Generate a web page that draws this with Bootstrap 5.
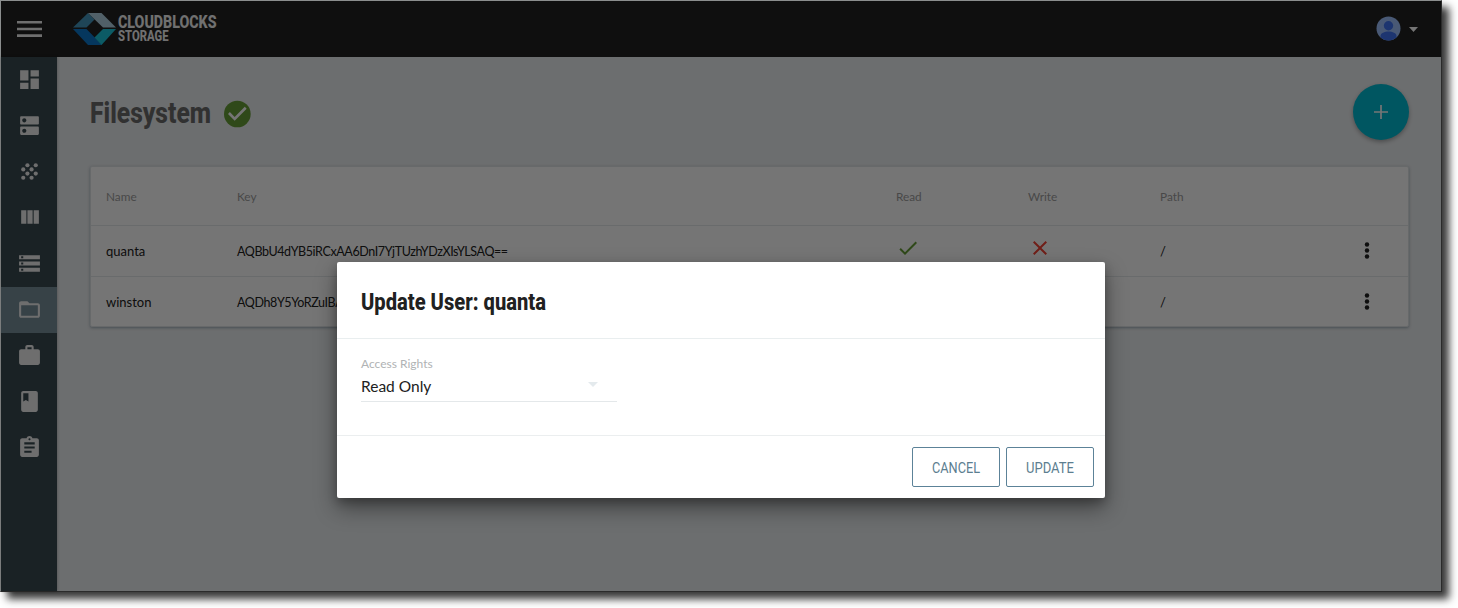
<!DOCTYPE html>
<html lang="en">
<head>
<meta charset="utf-8">
<meta name="viewport" content="width=device-width, initial-scale=1">
<title>Cloudblocks Storage - Filesystem</title>
<link href="https://cdn.jsdelivr.net/npm/bootstrap@5.3.0/dist/css/bootstrap.min.css" rel="stylesheet">
<style>
  body { background: #fff; font-family: Lato, "Liberation Sans", sans-serif; color: #212121; overflow: hidden; min-height: 608px; }
  .app-window { width: 1442px; height: 592px; border: 1px solid #8b8e8e; border-right-color: #2b2b2b; border-bottom-color: #2b2b2b; box-shadow: 7px 7px 8px #383838; background: #eceff1; }
  .topbar { height: 56px; background: #212121; padding: 0 23px 0 16px; }
  .brand-mark { margin-left: 31px; overflow: visible; }
  .rail { width: 56px; background: #3a4a51; box-shadow: 0 0 3px rgba(0,0,0,.3); }
  .rail a { height: 46px; color: #f0f0f0; padding-bottom: 2px; }
  .rail a.active { background: #78909c; }
  .rail svg { width: 25px; height: 25px; fill: currentColor; }
  .page-head { height: 109px; padding: 1px 32px 0 33px; }
  .headline { font-family: "Liberation Sans Narrow", Roboto, "Liberation Sans", sans-serif; font-weight: 800; overflow: visible; }
  .fab { width: 56px; height: 56px; background: #00bcd4; box-shadow: 0 2px 4px rgba(0,0,0,.3); }
  .data-card { margin: 0 32px 0 33px; border: 1px solid #e0e5e8; border-radius: 2px; box-shadow: 0 1px 3px rgba(60,90,110,.45); background: #fff; height: 161px; }
  .data-row { display: grid; grid-template-columns: 131px 659px 132px 132px 190px 1fr; align-items: center; padding-left: 15px; height: 51px; font-size: 13px; border-top: 1px solid #e5eaec; }
  .data-row.labels { height: 58px; font-size: 11.8px; color: #9e9e9e; border-top: 0; }
  .data-row span { padding-top: 2px; }
  .data-row .key-text { font-size: 12.5px; letter-spacing: -.39px; }
  .shade { background: rgba(0,0,0,.54); z-index: 5; }
  .dialog-layer { top: 261px; left: 336px; width: 768px; z-index: 6; }
  .dialog-box { height: 236px; border: 0; border-radius: 2px; background: #fff; color: #212121; box-shadow: 0 10px 22px rgba(0,0,0,.42), 0 4px 10px rgba(0,0,0,.22); }
  .dialog-box .modal-header { height: 77px; padding: 0 24px; border: 0; border-bottom: 1px solid #e9eeef; border-radius: 0; }
  .dialog-box .modal-body { padding: 17px 24px; }
  .dialog-box .modal-footer { height: 63px; padding: 0 11px; gap: 6px; border: 0; border-top: 1px solid #ebeeef; flex-wrap: nowrap; }
  .picker { width: 256px; height: 46px; border-bottom: 1px solid #e4e8ea; }
  .picker label { display: block; font-size: 12px; line-height: 16px; color: #b0b3b4; }
  .picker-value { font-size: 15.5px; line-height: 28px; color: #212121; }
  .btn-flatline { width: 88px; height: 40px; margin: 0 !important; padding: 0; border: 1px solid #5c8298; border-radius: 2px; background: #fff; }
  .btn-flatline svg { display: block; margin: 1px auto 0; overflow: visible; font-family: Roboto, "Liberation Sans", sans-serif; font-size: 14.5px; fill: #5c7e90; }
</style>
</head>
<body>
<div class="app-window position-relative d-flex flex-column">
  <header class="topbar d-flex align-items-center">
    <svg width="25" height="18" viewBox="0 0 25 18" fill="#f2f2f2"><path d="M0 1h25v2.6H0zM0 7.7h25v2.6H0zM0 14.3h25v2.6H0z"/></svg>
    <svg class="brand-mark" width="150" height="34" viewBox="0 0 150 34" role="img">
      <path fill="#4496bd" d="M0 15.500 15 1l6.500 6.500-8 8z"/>
      <path fill="#b0d2e2" d="M15 1h13.500L43 15.500H30z"/>
      <path fill="#0d78cc" d="M0 17h13.500l15.500 16H15z"/>
      <path fill="#1cc6dc" d="M43 17 28.500 33l-7-7.500 8.500-8.500z"/>
      <g class="headline" fill="#f5f5f5"><text x="45" y="15.500" font-size="18" textLength="98.500" lengthAdjust="spacingAndGlyphs">CLOUDBLOCKS</text>
      <text x="45" y="29" font-size="14.500" textLength="50.500" lengthAdjust="spacingAndGlyphs">STORAGE</text></g>
    </svg>
    <div class="ms-auto d-flex align-items-center">
      <svg width="25" height="26" viewBox="0 0 25 26"><defs><clipPath id="face"><circle cx="12.500" cy="12.500" r="12"/></clipPath></defs><g clip-path="url(#face)"><path fill="#9fc2ff" d="M0 0h25v26H0z"/><circle cx="12.500" cy="9.700" r="4.700" fill="#4175f4"/><path fill="#4175f4" d="M4.500 22v-2c0-6 16-6 16 0v2l-8 4z"/></g></svg>
      <svg class="ms-2" width="9" height="5" viewBox="0 0 9 5" fill="#fff"><path d="M0 0h9L4.500 5z"/></svg>
    </div>
  </header>
  <div class="d-flex flex-grow-1">
    <nav class="rail d-flex flex-column">
      <a class="d-flex align-items-center justify-content-center"><svg viewBox="0 0 24 24"><path d="M3 13h8V3H3v10zm0 8h8v-6H3v6zm10 0h8V11h-8v10zm0-18v6h8V3h-8z"/></svg></a>
      <a class="d-flex align-items-center justify-content-center"><svg viewBox="0 0 24 24"><path d="M20 13H4c-.55 0-1 .45-1 1v6c0 .55.45 1 1 1h16c.55 0 1-.45 1-1v-6c0-.55-.45-1-1-1zM7 19c-1.100 0-2-.9-2-2s.9-2 2-2 2 .9 2 2-.9 2-2 2zM20 3H4c-.55 0-1 .45-1 1v6c0 .55.45 1 1 1h16c.55 0 1-.45 1-1V4c0-.55-.45-1-1-1zM7 9c-1.100 0-2-.9-2-2s.9-2 2-2 2 .9 2 2-.9 2-2 2z"/></svg></a>
      <a class="d-flex align-items-center justify-content-center"><svg viewBox="0 0 24 24"><circle cx="10" cy="6" r="2"/><circle cx="18" cy="6" r="2"/><circle cx="6" cy="10" r="2"/><circle cx="14" cy="10" r="2"/><circle cx="10" cy="14" r="2"/><circle cx="18" cy="14" r="2"/><circle cx="6" cy="18" r="2"/><circle cx="14" cy="18" r="2"/></svg></a>
      <a class="d-flex align-items-center justify-content-center"><svg viewBox="0 0 24 24"><path d="M10 18h5V5h-5v13zm-6 0h5V5H4v13zM16 5v13h5V5h-5z"/></svg></a>
      <a class="d-flex align-items-center justify-content-center"><svg viewBox="0 0 24 24"><path d="M2 20h20v-4H2v4zm2-3h2v2H4v-2zM2 4v4h20V4H2zm4 3H4V5h2v2zm-4 7h20v-4H2v4zm2-3h2v2H4v-2z"/></svg></a>
      <a class="active d-flex align-items-center justify-content-center"><svg viewBox="0 0 24 24"><path d="M20 6h-8l-2-2H4c-1.100 0-1.990.9-1.990 2L2 18c0 1.100.9 2 2 2h16c1.100 0 2-.9 2-2V8c0-1.100-.9-2-2-2zm0 12H4V8h16v10z"/></svg></a>
      <a class="d-flex align-items-center justify-content-center"><svg viewBox="0 0 24 24"><path d="M20 6h-4V4c0-1.110-.89-2-2-2h-4c-1.110 0-2 .89-2 2v2H4c-1.110 0-1.990.89-1.990 2L2 19c0 1.110.89 2 2 2h16c1.110 0 2-.89 2-2V8c0-1.110-.89-2-2-2zm-6 0h-4V4h4v2z"/></svg></a>
      <a class="d-flex align-items-center justify-content-center"><svg viewBox="0 0 24 24"><path d="M18 2H6c-1.100 0-2 .9-2 2v16c0 1.100.9 2 2 2h12c1.100 0 2-.9 2-2V4c0-1.100-.9-2-2-2zM6 4h5v8l-2.500-1.500L6 12V4z"/></svg></a>
      <a class="d-flex align-items-center justify-content-center"><svg viewBox="0 0 24 24"><path d="M19 3h-4.180C14.400 1.840 13.300 1 12 1c-1.300 0-2.400.84-2.820 2H5c-1.100 0-2 .9-2 2v14c0 1.100.9 2 2 2h14c1.100 0 2-.9 2-2V5c0-1.100-.9-2-2-2zm-7 0c.55 0 1 .45 1 1s-.45 1-1 1-1-.45-1-1 .45-1 1-1zm2 14H7v-2h7v2zm3-4H7v-2h10v2zm0-4H7V7h10v2z"/></svg></a>
    </nav>
    <main class="flex-grow-1">
      <div class="page-head d-flex align-items-center">
        <svg class="headline" width="130" height="40" viewBox="0 0 130 40"><text x="0" y="30.500" font-size="29.500" fill="#6b6b6b" textLength="121" lengthAdjust="spacingAndGlyphs">Filesystem</text></svg>
        <svg class="mt-1" width="32" height="32" viewBox="0 0 24 24"><circle cx="13" cy="12" r="10" fill="#689f38"/><path fill="#fff" d="M11 17l-5-5 1.410-1.410L11 14.170l7.590-7.590L20 8z"/></svg>
        <button class="fab btn rounded-circle border-0 p-0 ms-auto" aria-label="Add"><svg class="d-block mx-auto" width="14" height="14" viewBox="0 0 14 14"><path d="M7 0v14M0 7h14" stroke="#fff" stroke-width="1.700"/></svg></button>
      </div>
      <div class="data-card">
        <div class="data-row labels"><span>Name</span><span>Key</span><span>Read</span><span>Write</span><span>Path</span></div>
        <div class="data-row"><span>quanta</span><span class="key-text">AQBbU4dYB5iRCxAA6DnI7YjTUzhYDzXIsYLSAQ==</span>
          <svg width="24" height="24" viewBox="0 1 24 24" fill="#689f38"><path d="M9 14.170L4.830 10l-1.420 1.410L9 17 21 5l-1.410-1.410z"/></svg>
          <svg width="24" height="24" viewBox="0 1 24 24" fill="#f44336"><path d="M19 4.410L17.590 3 12 8.590 6.410 3 5 4.410 10.590 10 5 15.590 6.410 17 12 11.410 17.590 17 19 15.590 13.410 10z"/></svg>
          <span>/</span><svg width="34" height="24" viewBox="0 0 34 24" fill="#212121"><circle cx="17" cy="5.500" r="2.200"/><circle cx="17" cy="11.500" r="2.200"/><circle cx="17" cy="17.500" r="2.200"/></svg></div>
        <div class="data-row"><span>winston</span><span class="key-text">AQDh8Y5YoRZuIBA</span><span></span><span></span>
          <span>/</span><svg width="34" height="24" viewBox="0 0 34 24" fill="#212121"><circle cx="17" cy="5.500" r="2.200"/><circle cx="17" cy="11.500" r="2.200"/><circle cx="17" cy="17.500" r="2.200"/></svg></div>
      </div>
    </main>
  </div>
  <div class="shade position-absolute top-0 start-0 w-100 h-100"></div>
  <div class="dialog-layer position-absolute">
    <div class="dialog-box modal-content">
      <div class="modal-header"><svg class="headline" width="200" height="40" viewBox="0 0 200 40"><text x="0" y="29.500" font-size="24.500" fill="#212121" textLength="185" lengthAdjust="spacingAndGlyphs">Update User: quanta</text></svg></div>
      <div class="modal-body">
        <div class="picker"><label>Access Rights</label>
          <div class="d-flex align-items-center justify-content-between"><span class="picker-value">Read Only</span><svg class="mb-1" width="29" height="5" viewBox="0 0 29 5"><path fill="#e4eaed" d="M0 0h10L5 5z"/></svg></div>
        </div>
      </div>
      <div class="modal-footer"><button class="btn btn-flatline"><svg width="48" height="16" viewBox="0 0 48 16"><text x="0" y="13" textLength="48" lengthAdjust="spacingAndGlyphs">CANCEL</text></svg></button><button class="btn btn-flatline"><svg width="48" height="16" viewBox="0 0 48 16"><text x="0" y="13" textLength="48" lengthAdjust="spacingAndGlyphs">UPDATE</text></svg></button></div>
    </div>
  </div>
</div>
<script src="https://cdn.jsdelivr.net/npm/bootstrap@5.3.0/dist/js/bootstrap.bundle.min.js"></script>
</body>
</html>
